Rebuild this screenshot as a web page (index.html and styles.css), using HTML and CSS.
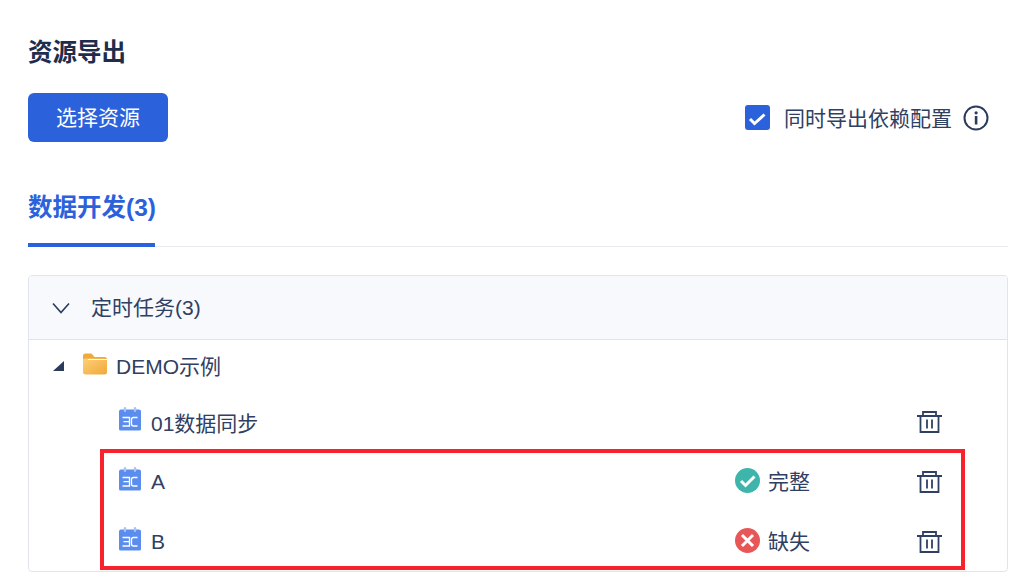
FILE: index.html
```html
<!DOCTYPE html>
<html lang="zh">
<head>
<meta charset="utf-8">
<title>资源导出</title>
<link rel="stylesheet" href="styles.css">
</head>
<body>
<svg class="defs" width="0" height="0" aria-hidden="true">
  <defs>
    <linearGradient id="folderGrad" x1="0" y1="0" x2="1" y2="1">
      <stop offset="0" stop-color="#fdd078"/>
      <stop offset="1" stop-color="#f0a83a"/>
    </linearGradient>
  </defs>
  <symbol id="cal" viewBox="0 0 24 25">
    <path fill="#5b8def" d="M1 5.500A2 2 0 0 1 3 3.500h18a2 2 0 0 1 2 2V23a1.500 1.500 0 0 1-1.500 1.500h-19A1.500 1.500 0 0 1 1 23z"/>
    <rect x="5.800" y="1" width="2.400" height="5" rx="1.200" fill="#a9c4f7"/>
    <rect x="15.800" y="1" width="2.400" height="5" rx="1.200" fill="#a9c4f7"/>
    <path fill="none" stroke="#fff" stroke-width="1.300" d="M4.500 11.500h7v8.500h-7M5.500 15.700h6M19.500 11.500h-4a2 2 0 0 0-2 2V18a2 2 0 0 0 2 2h4"/>
  </symbol>
  <symbol id="trash" viewBox="0 0 25 22">
    <path fill="none" stroke="#2f4063" stroke-width="1.800" d="M0 5h25M6 5V1h13v4M3.500 5v16h18V5M10 8.500v9M15 8.500v9"/>
  </symbol>
</svg>
<main class="page">
  <h1 class="title">资源导出</h1>
  <div class="toolbar">
    <button class="btn" type="button">选择资源</button>
    <div class="option">
      <span class="checkbox">
        <svg viewBox="0 0 25 25" width="25" height="25"><path fill="none" stroke="#fff" stroke-width="3" d="M5 14l4.500 4.500 10-9"/></svg>
      </span>
      <span class="option-label">同时导出依赖配置</span>
      <svg class="info" viewBox="0 0 26 26" width="26" height="26">
        <circle cx="13" cy="13" r="11.500" fill="none" stroke="#2a3b5c" stroke-width="2"/>
        <rect x="11.800" y="11" width="2.600" height="8.500" fill="#2a3b5c"/>
        <circle cx="13.100" cy="7.800" r="1.600" fill="#2a3b5c"/>
      </svg>
    </div>
  </div>
  <div class="tabs"><div class="tab">数据开发(3)</div></div>
  <section class="panel">
    <header class="panel-head">
      <svg class="chevron" viewBox="0 0 18 12" width="18" height="12"><path fill="none" stroke="#2a3b5c" stroke-width="1.600" d="M1 1.500l8 9 8-9"/></svg>
      <span class="panel-title">定时任务(3)</span>
    </header>
    <div class="tree">
      <div class="folder-row">
        <span class="caret"></span>
        <svg class="folder" viewBox="0 0 24 22" width="24" height="22">
          <path fill="#f0a93a" d="M0 3a2.500 2.500 0 0 1 2.500-2.500h6L11.500 4H21.500A2.500 2.500 0 0 1 24 6.500V12H0z"/>
          <path fill="url(#folderGrad)" d="M0 7a1.500 1.500 0 0 1 1.500-1.500h21A1.500 1.500 0 0 1 24 7v12a2.500 2.500 0 0 1-2.500 2.500h-19A2.500 2.500 0 0 1 0 19z"/>
          <path fill="#fff" d="M5 6h19v1H5z"/>
        </svg>
        <span class="folder-name">DEMO示例</span>
      </div>
      <div class="item item-first">
        <svg class="cal"><use href="#cal"/></svg>
        <span class="name">01数据同步</span>
        <svg class="trash"><use href="#trash"/></svg>
      </div>
      <div class="item">
        <svg class="cal"><use href="#cal"/></svg>
        <span class="name">A</span>
        <span class="status">
          <svg viewBox="0 0 25 25" width="25" height="25"><circle cx="12.500" cy="12.500" r="12.500" fill="#3eb5aa"/><path fill="none" stroke="#fff" stroke-width="3" d="M6 13l4.500 4.500 9-9"/></svg>
          完整
        </span>
        <svg class="trash"><use href="#trash"/></svg>
      </div>
      <div class="item">
        <svg class="cal"><use href="#cal"/></svg>
        <span class="name">B</span>
        <span class="status">
          <svg viewBox="0 0 25 25" width="25" height="25"><circle cx="12.500" cy="12.500" r="12.500" fill="#e85757"/><path fill="none" stroke="#fff" stroke-width="3" d="M7 7l11 11M18 7l-11 11"/></svg>
          缺失
        </span>
        <svg class="trash"><use href="#trash"/></svg>
      </div>
    </div>
  </section>
</main>
<div class="highlight"></div>
</body>
</html>
```
FILE: styles.css
```css
* { box-sizing: border-box; }
html, body { margin: 0; height: 100%; overflow: hidden; }
body {
  position: relative;
  background: #fff;
  color: #2f4063;
  font-family: "Liberation Sans", "Noto Sans CJK SC", sans-serif;
  font-size: 21px;
}
.defs { position: absolute; }
.page { padding: 36px 21px 0 28px; }
.title {
  margin: 0;
  height: 34px;
  font-size: 24.5px;
  line-height: 34px;
  font-weight: 700;
  color: #1f2d4d;
}
.toolbar {
  display: flex;
  align-items: center;
  justify-content: space-between;
  margin-top: 23px;
}
.btn {
  width: 140px;
  height: 49px;
  border: 0;
  border-radius: 6px;
  background: #2c61dc;
  color: #fff;
  font: inherit;
  padding: 0 0 3px;
}
.option {
  display: flex;
  align-items: center;
  padding-right: 19px;
}
.checkbox {
  width: 25px;
  height: 25px;
  border-radius: 3px;
  background: #2c61dc;
  display: block;
}
.checkbox svg { display: block; }
.option-label { margin-left: 14px; margin-bottom: 2px; }
.info { margin-left: 11px; }
.tabs {
  margin-top: 42px;
  height: 63px;
  border-bottom: 1px solid #e8eaf2;
}
.tab {
  width: 127px;
  height: 63px;
  padding-top: 7px;
  border-bottom: 4px solid #2c61dc;
  color: #2c61dc;
  font-size: 24.5px;
  font-weight: 700;
  line-height: 34px;
  white-space: nowrap;
  margin-bottom: -1px;
}
.panel {
  margin-top: 28px;
  height: 297px;
  border: 1px solid #e1e4ee;
  border-radius: 4px;
  overflow: hidden;
}
.panel-head {
  display: flex;
  align-items: center;
  height: 64px;
  padding-left: 23px;
  gap: 21px;
  background: #f8f9fc;
  border-bottom: 1px solid #dfe3ec;
}
.panel-title { margin-bottom: 3px; }
.folder-row {
  display: flex;
  align-items: center;
  height: 54px;
  padding-left: 24px;
}
.folder-name { margin-bottom: 4px; }
.caret {
  width: 0;
  height: 0;
  border-left: 11px solid transparent;
  border-bottom: 10px solid #2a3b5c;
  margin-bottom: 2px;
}
.folder { margin: -6px 9px 0 19px; }
.item {
  display: flex;
  align-items: center;
  height: 60px;
  padding: 0 65px 0 89px;
}
.item-first { height: 58px; padding-bottom: 2px; }
.cal { width: 24px; height: 25px; margin-top: -8px; }
.name { margin-left: 9px; flex: 1; margin-bottom: 1px; }
.status {
  display: flex;
  align-items: center;
  gap: 8px;
  width: 182px;
  margin-top: -4px;
}
.trash { width: 25px; height: 22px; }
.highlight {
  position: absolute;
  left: 100px;
  top: 449px;
  width: 865px;
  height: 121px;
  border: 4px solid #f8222c;
}
```
